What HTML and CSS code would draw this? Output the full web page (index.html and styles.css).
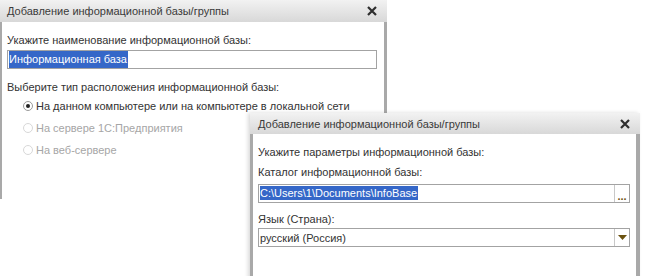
FILE: index.html
```html
<!DOCTYPE html>
<html lang="ru">
<head>
<meta charset="utf-8">
<link rel="stylesheet" href="styles.css">
</head>
<body>
<div class="desk">
  <div class="win win1">
    <div class="titlebar">
      <span class="title">Добавление информационной базы/группы</span>
      <svg class="close" width="10" height="10" viewBox="0 0 10 10"><path d="M1 1L9 9M9 1L1 9" stroke="#2e2e2e" stroke-width="2.2"/></svg>
    </div>
    <div class="body">
      <div class="label">Укажите наименование информационной базы:</div>
      <div class="field wide"><span class="sel">Информационная база</span></div>
      <div class="label l2">Выберите тип расположения информационной базы:</div>
      <div class="radios">
        <div class="radio"><span class="dot on"></span>На данном компьютере или на компьютере в локальной сети</div>
        <div class="radio off"><span class="dot"></span>На сервере 1С:Предприятия</div>
        <div class="radio off"><span class="dot"></span>На веб-сервере</div>
      </div>
    </div>
  </div>
  <div class="win win2">
    <div class="titlebar">
      <span class="title">Добавление информационной базы/группы</span>
      <svg class="close" width="10" height="10" viewBox="0 0 10 10"><path d="M1 1L9 9M9 1L1 9" stroke="#2e2e2e" stroke-width="2.2"/></svg>
    </div>
    <div class="body">
      <div class="label">Укажите параметры информационной базы:</div>
      <div class="label l3">Каталог информационной базы:</div>
      <div class="field combo c1"><span class="val"><span class="sel">C:\Users\1\Documents\InfoBase</span></span><span class="btn dots">...</span></div>
      <div class="label l3">Язык (Страна):</div>
      <div class="field combo c2"><span class="val">русский (Россия)</span><span class="btn"><svg width="9" height="5" viewBox="0 0 9 5"><path d="M0 0H9L4.5 5Z" fill="#6b5210"/></svg></span></div>
    </div>
  </div>
</div>
</body>
</html>
```

FILE: styles.css
```css
html, body {
  margin: 0;
  padding: 0;
  background: #ffffff;
}
.desk {
  position: relative;
  width: 667px;
  height: 276px;
  overflow: hidden;
  font-family: "Liberation Sans", Arial, sans-serif;
  font-size: 11px;
  color: #333333;
}
.win {
  position: absolute;
  display: flex;
  flex-direction: column;
  background: #ffffff;
}
.win1 {
  left: 0;
  top: 0;
  width: 387px;
  height: 199px;
}
.win2 {
  left: 250px;
  top: 113px;
  width: 390px;
  height: 170px;
  box-shadow: -2px 0 4px rgba(0,0,0,0.15);
}
.titlebar {
  height: 22px;
  flex: none;
  display: flex;
  align-items: center;
  justify-content: space-between;
  padding: 0 10px 0 7px;
  background: linear-gradient(#f2f2f2, #d8d8d8);
  color: #3a3a3a;
  font-size: 11px;
}
.win2 .titlebar {
  height: 21px;
  padding-left: 8px;
}
.body {
  flex: 1;
  border-left: 2px solid #a9a9a9;
  border-right: 3px solid #a9a9a9;
  padding: 10px 7px 0 5px;
  display: flex;
  flex-direction: column;
}
.win2 .body {
  border-left-width: 3px;
  border-right-width: 4px;
  padding-left: 5px;
  padding-right: 6px;
}
.label {
  height: 16px;
  line-height: 16px;
  white-space: nowrap;
}
.l2 {
  margin-top: 10px;
}
.l3 {
  margin-top: 4px;
}
.field {
  margin-top: 2px;
  height: 19px;
  border: 1px solid #a3a3a3;
  box-sizing: border-box;
  display: flex;
  align-items: center;
  padding-left: 1px;
  white-space: nowrap;
}
.sel {
  background: #3567c8;
  color: #ffffff;
  padding: 1px 1px 1px 0;
  line-height: 15px;
}
.combo {
  padding-left: 0;
}
.c1 {
  margin-top: 4px;
  margin-bottom: 4px;
}
.c2 {
  margin-top: 1px;
}
.combo .val {
  flex: 1;
  padding-left: 1px;
}
.btn {
  flex: none;
  width: 14px;
  height: 17px;
  border-left: 1px solid #c8c8c8;
  display: flex;
  align-items: center;
  justify-content: center;
}
.dots {
  color: #6b5210;
  font-weight: bold;
  font-size: 11px;
  letter-spacing: 0;
  align-items: flex-end;
  line-height: 12px;
}
.radios {
  margin-top: 3px;
  padding-left: 16px;
  display: flex;
  flex-direction: column;
  gap: 6px;
}
.radio {
  height: 16px;
  line-height: 16px;
  display: flex;
  align-items: center;
  gap: 3px;
  white-space: nowrap;
}
.radio.off {
  color: #a6a6a6;
}
.dot {
  flex: none;
  width: 10px;
  height: 10px;
  border: 1px solid #9a9a9a;
  border-radius: 50%;
  box-sizing: border-box;
  position: relative;
  background: #fff;
}
.off .dot {
  border-color: #d8d8d8;
}
.dot.on::after {
  content: "";
  position: absolute;
  left: 2px;
  top: 2px;
  width: 4px;
  height: 4px;
  border-radius: 50%;
  background: #222;
}
```
